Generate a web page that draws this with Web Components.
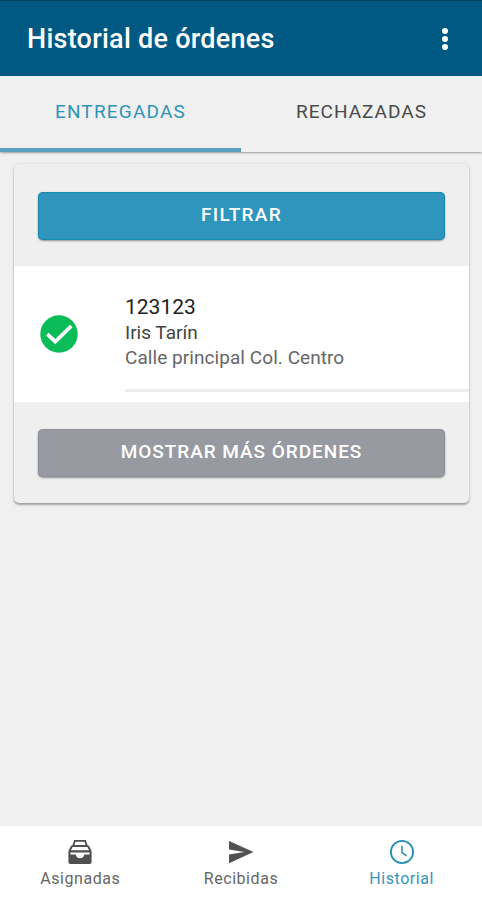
<!DOCTYPE html>
<html lang="es">
<head>
<meta charset="utf-8">
<meta name="viewport" content="width=device-width, initial-scale=1">
<title>Historial de órdenes</title>
<style>
  body {
    margin: 0;
    background: #f0f0f0;
    font-family: Roboto, "Liberation Sans", sans-serif;
  }
</style>
</head>
<body>
<orders-page>
  <app-toolbar slot="header">Historial de órdenes</app-toolbar>
  <tab-bar slot="header">
    <tab-item active>ENTREGADAS</tab-item>
    <tab-item>RECHAZADAS</tab-item>
  </tab-bar>
  <order-card>
    <action-button slot="top">FILTRAR</action-button>
    <order-item>
      <span slot="number">123123</span>
      <span slot="name">Iris Tarín</span>
      <span slot="address">Calle principal Col. Centro</span>
    </order-item>
    <action-button slot="bottom" color="medium">MOSTRAR MÁS ÓRDENES</action-button>
  </order-card>
  <bottom-nav slot="footer">
    <nav-item>
      <svg slot="icon" viewBox="0 0 24 24" fill="currentColor"><path fill-rule="evenodd" d="M6.2 0h11.6l1.8 5.2c1 .2 1.7.8 2 1.700L23.600 11v11a2 2 0 0 1-2 2H2.400a2 2 0 0 1-2-2V11L2.400 6.900c.3-.9 1-1.500 2-1.700zM7.500 1.700 6.400 5.100h11.200l-1.100-3.400zM4.600 6.900 3 10.300h18l-1.600-3.400zM2.400 12.400v2.100h5.400c.2 2.100 2 3.700 4.200 3.700s4-1.600 4.200-3.700h5.400v-2.100z"/></svg>
      Asignadas
    </nav-item>
    <nav-item>
      <svg slot="icon" viewBox="0 0 24 24" fill="currentColor"><path d="M0 1v8.500L15.500 12 0 14.500V23.200L24.500 12z"/></svg>
      Recibidas
    </nav-item>
    <nav-item active>
      <svg slot="icon" viewBox="0 0 24 24" fill="none" stroke="currentColor"><circle cx="12" cy="12" r="11.1" stroke-width="1.8"/><path d="M12 5.800V12.600l4.600 3.300" stroke-width="1.5"/></svg>
      Historial
    </nav-item>
  </bottom-nav>
</orders-page>

<script>
  function define(name, html) {
    const template = document.createElement('template');
    template.innerHTML = html;

    customElements.define(name, class extends HTMLElement {
      constructor() {
        super();
        this.attachShadow({ mode: 'open' }).appendChild(template.content.cloneNode(true));
      }
    });
  }

  define('orders-page', `
    <style>
      :host {
        display: flex;
        flex-direction: column;
        height: 900px;
      }

      main {
        flex: 1;
        padding: 12px 13px 0 14px;
      }
    </style>
    <slot name="header"></slot>
    <main><slot></slot></main>
    <slot name="footer"></slot>
  `);

  define('app-toolbar', `
    <style>
      :host {
        display: flex;
        align-items: center;
        justify-content: space-between;
        height: 76px;
        padding: 0 33px 0 27px;
        box-sizing: border-box;
        background: #005983;
        box-shadow: inset 0 2px 1px -1px #003f60;
        color: #fff;
      }

      h1 {
        margin: 0;
        padding-top: 2px;
        font-size: 27px;
        font-weight: 500;
        line-height: 30px;
        letter-spacing: 0.25px;
        white-space: nowrap;
      }

      svg {
        width: 8px;
        height: 24px;
        padding-top: 2px;
      }
    </style>
    <h1><slot></slot></h1>
    <svg viewBox="0 0 8 24" fill="currentColor"><circle cx="4" cy="4" r="3"/><circle cx="4" cy="12" r="3"/><circle cx="4" cy="20" r="3"/></svg>
  `);

  define('tab-bar', `
    <style>
      :host {
        display: grid;
        grid-template-columns: 1fr 1fr;
        height: 76px;
        background: #f0f0f0;
        box-shadow: 0 1px 2px rgba(0, 0, 0, 0.35);
      }
    </style>
    <slot></slot>
  `);

  define('tab-item', `
    <style>
      :host {
        display: flex;
        align-items: center;
        justify-content: center;
        box-sizing: border-box;
        padding-bottom: 2px;
        border-bottom: 4px solid transparent;
        color: #4a4a4a;
        font-size: 19px;
        letter-spacing: 1px;
      }

      :host([active]) {
        color: #2f94b8;
        border-color: #5a9fbd;
        letter-spacing: 1.2px;
      }
    </style>
    <slot></slot>
  `);

  define('order-card', `
    <style>
      :host {
        display: block;
        border-radius: 5px;
        background: #efefef;
        box-shadow: 0 2px 2px rgba(0, 0, 0, 0.3), 0 0 3px rgba(0, 0, 0, 0.13);
      }

      .top {
        padding: 28px 24px 26px;
      }

      .bottom {
        padding: 27px 24px 26px;
      }
    </style>
    <div class="top"><slot name="top"></slot></div>
    <slot></slot>
    <div class="bottom"><slot name="bottom"></slot></div>
  `);

  define('action-button', `
    <style>
      :host {
        display: block;
      }

      button {
        display: block;
        width: 100%;
        height: 48px;
        padding: 0 0 4px;
        border: 0;
        border-radius: 5px;
        background: #2f95bc;
        box-shadow: inset 0 0 1px 1px #168bad, 0 1px 2px rgba(0, 0, 0, 0.4);
        color: #fff;
        font: 500 19px Roboto, "Liberation Sans", sans-serif;
        letter-spacing: 1.3px;
      }

      :host([color="medium"]) button {
        padding-bottom: 3px;
        background: #989aa2;
        box-shadow: inset 0 0 1px 1px #909299, 0 1px 2px rgba(0, 0, 0, 0.4);
        letter-spacing: 0.95px;
      }
    </style>
    <button><slot></slot></button>
  `);

  define('order-item', `
    <style>
      :host {
        display: flex;
        align-items: center;
        height: 136px;
        padding-left: 26px;
        box-sizing: border-box;
        background: #fff;
      }

      svg {
        width: 38px;
        height: 38px;
        flex-shrink: 0;
      }

      .info {
        flex: 1;
        display: flex;
        flex-direction: column;
        align-self: flex-start;
        height: 126px;
        margin-left: 47px;
        padding-top: 28px;
        box-sizing: border-box;
        border-bottom: 3px solid #ececec;
        white-space: nowrap;
      }

      .number {
        font-size: 21px;
        line-height: 26px;
        color: #222;
      }

      .name {
        font-size: 19px;
        line-height: 26px;
        color: #444;
      }

      .address {
        font-size: 19px;
        line-height: 23px;
        letter-spacing: 0.06px;
        color: #666;
      }
    </style>
    <svg viewBox="0 0 38 38"><circle cx="19" cy="19" r="18.700" fill="#0bbd58"/><path d="M7.300 19.200 15.300 26.700 31.300 11" fill="none" stroke="#fff" stroke-width="3.800"/></svg>
    <div class="info">
      <div class="number"><slot name="number"></slot></div>
      <div class="name"><slot name="name"></slot></div>
      <div class="address"><slot name="address"></slot></div>
    </div>
  `);

  define('bottom-nav', `
    <style>
      :host {
        display: grid;
        grid-template-columns: repeat(3, 1fr);
        height: 74px;
        background: #fff;
      }
    </style>
    <slot></slot>
  `);

  define('nav-item', `
    <style>
      :host {
        display: flex;
        flex-direction: column;
        align-items: center;
        padding-top: 14px;
        color: #666;
        font-size: 16px;
        letter-spacing: 0.55px;
      }

      :host([active]) {
        color: #3596b9;
      }

      ::slotted(svg) {
        display: block;
        width: 24px;
        height: 24px;
        overflow: visible;
        color: #505050;
      }

      :host([active]) ::slotted(svg) {
        color: #2490b4;
      }

      .label {
        margin-top: 5px;
        line-height: 20px;
      }
    </style>
    <slot name="icon"></slot>
    <span class="label"><slot></slot></span>
  `);
</script>
</body>
</html>
